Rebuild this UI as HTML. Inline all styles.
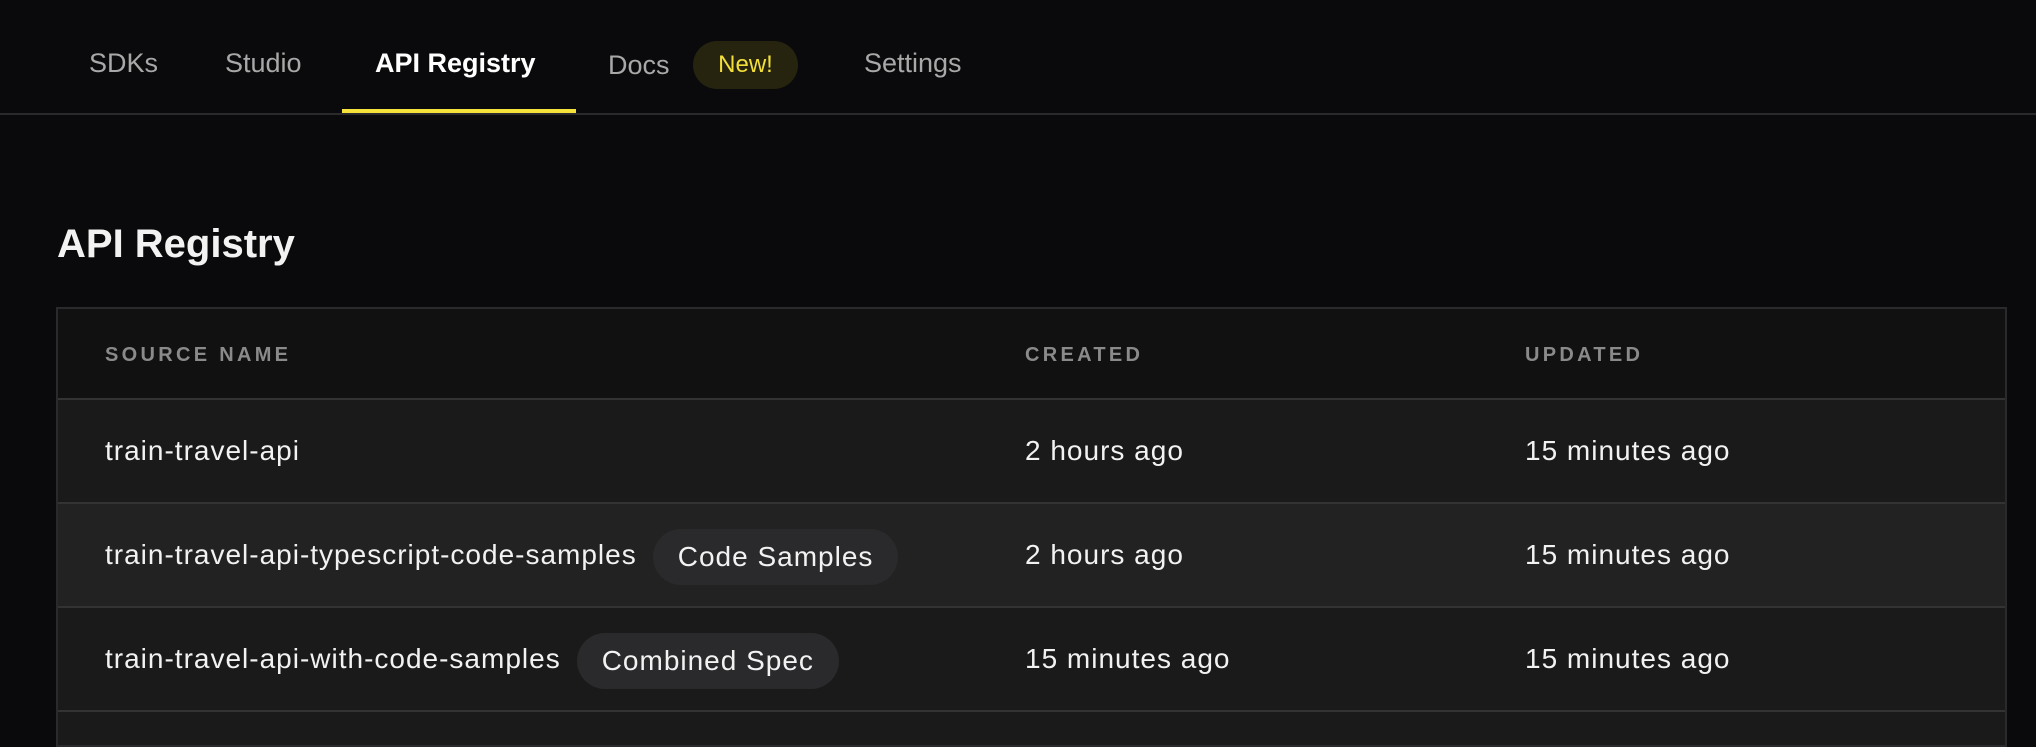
<!DOCTYPE html>
<html><head><style>
*{margin:0;padding:0;box-sizing:border-box}
body{width:2036px;height:732px;overflow:hidden;background:#0a0a0c;font-family:"Liberation Sans",sans-serif;color:#f2f2f2;position:relative}
.nav{position:absolute;left:0;top:0;width:2036px;height:115px;border-bottom:2px solid #2a2a2c}
.nav span{position:absolute;top:48px;font-size:27px;color:#a8a8a8;line-height:30px}
.nav .act{color:#fff;font-weight:bold}
.ul{position:absolute;left:342px;top:109px;width:234px;height:4px;background:#f5e23a}
.new{position:absolute;left:693px;top:41px;width:105px;height:48px;border-radius:24px;background:#26240f;color:#f3df3a;font-size:24px;line-height:48px;text-align:center}
h1{position:absolute;left:57px;top:222px;font-size:40px;font-weight:bold;color:#f2f2f2}
.tbl{position:absolute;left:56px;top:307px;width:1951px;height:440px;border:2px solid #2a2a2c;background:#1a1a1a}
.row{position:absolute;left:0;width:100%;border-bottom:2px solid #333}
.row div{position:absolute;font-size:28px;line-height:30px;letter-spacing:1px}
.hd{background:#111;top:0;height:91px}
.hd div{font-size:20px;font-weight:bold;letter-spacing:3.3px;color:#8a8a8a;top:31px}
.badge{display:inline-block;background:#2a2a2c;border-radius:28px;height:56px;line-height:56px;padding:0 25px;margin-left:16px;vertical-align:middle}
</style></head><body>
<div class="nav">
<span style="left:89px">SDKs</span>
<span style="left:225px">Studio</span>
<span class="act" style="left:375px">API Registry</span>
<span style="left:608px;top:50px">Docs</span>
<div class="new">New!</div>
<span style="left:864px">Settings</span>
<div class="ul"></div>
</div>
<h1>API Registry</h1>
<div class="tbl">
<div class="row hd"><div style="left:47px">SOURCE NAME</div><div style="left:967px">CREATED</div><div style="left:1467px">UPDATED</div></div>
<div class="row" style="top:91px;height:104px"><div style="left:47px;top:36px">train-travel-api</div><div style="left:967px;top:36px">2 hours ago</div><div style="left:1467px;top:36px">15 minutes ago</div></div>
<div class="row" style="top:195px;height:104px;background:#222"><div style="left:47px;top:23px;line-height:56px">train-travel-api-typescript-code-samples<span class="badge">Code Samples</span></div><div style="left:967px;top:36px">2 hours ago</div><div style="left:1467px;top:36px">15 minutes ago</div></div>
<div class="row" style="top:299px;height:104px"><div style="left:47px;top:23px;line-height:56px">train-travel-api-with-code-samples<span class="badge">Combined Spec</span></div><div style="left:967px;top:36px">15 minutes ago</div><div style="left:1467px;top:36px">15 minutes ago</div></div>
</div>
</body></html>
